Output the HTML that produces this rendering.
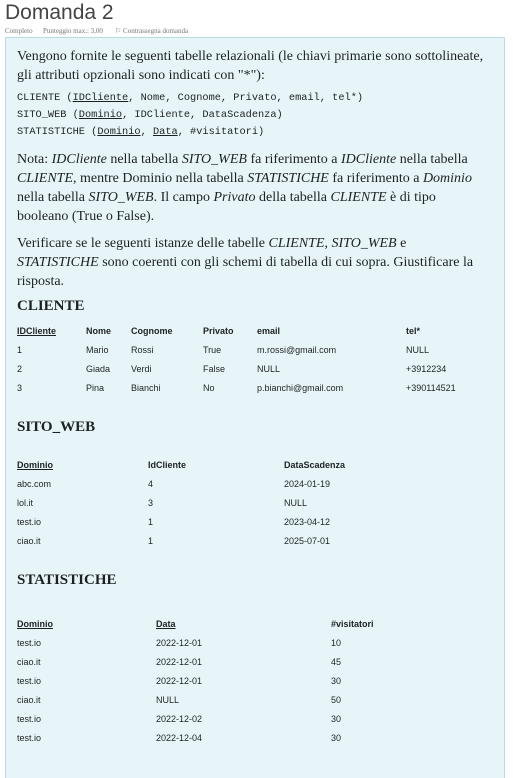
<!DOCTYPE html>
<html style="overflow:hidden"><head><meta charset="utf-8"><style>
html,body{margin:0;width:513px;height:778px;overflow:hidden}
body{background:#fff;position:relative;font-family:"Liberation Serif",serif;color:#1d2125}
.a{position:absolute;white-space:nowrap}
h1{position:absolute;left:5px;top:0;margin:0;font:normal 21px "Liberation Sans",sans-serif;color:#444;line-height:26px}
.meta{position:absolute;top:27px;font-size:7px;color:#777}
.box{position:absolute;left:5px;top:37px;width:498px;height:760px;background:#e7f5f8;border:1px solid #b8dce5}
.p{font-size:14px;line-height:19px}
.c{font:10.3px "Liberation Mono",monospace;line-height:17px}
.h{font-weight:bold;font-size:15px}
.t{font:9px "Liberation Sans",sans-serif}
.b{font-weight:bold}
u{text-decoration:underline}
</style></head><body>
<h1>Domanda 2</h1>
<div class="meta a" style="left:5px">Completo</div>
<div class="meta a" style="left:43px">Punteggio max.: 3,00</div>
<div class="meta a" style="left:115px">⚐ Contrassegna domanda</div>
<div class="box"></div>
<div class="a p" style="left:17px;top:47px">Vengono fornite le seguenti tabelle relazionali (le chiavi primarie sono sottolineate,</div>
<div class="a p" style="left:17px;top:66px">gli attributi opzionali sono indicati con "*"):</div>
<div class="a c" style="left:17px;top:90px">CLIENTE (<u>IDCliente</u>, Nome, Cognome, Privato, email, tel*)</div>
<div class="a c" style="left:17px;top:107px">SITO_WEB (<u>Dominio</u>, IDCliente, DataScadenza)</div>
<div class="a c" style="left:17px;top:124px">STATISTICHE (<u>Dominio</u>, <u>Data</u>, #visitatori)</div>
<div class="a p" style="left:17px;top:150px">Nota: <i>IDCliente</i> nella tabella <i>SITO_WEB</i> fa riferimento a <i>IDCliente</i> nella tabella</div>
<div class="a p" style="left:17px;top:169px"><i>CLIENTE</i>, mentre Dominio nella tabella <i>STATISTICHE</i> fa riferimento a <i>Dominio</i></div>
<div class="a p" style="left:17px;top:188px">nella tabella <i>SITO_WEB</i>. Il campo <i>Privato</i> della tabella <i>CLIENTE</i> è di tipo</div>
<div class="a p" style="left:17px;top:207px">booleano (True o False).</div>
<div class="a p" style="left:17px;top:234px">Verificare se le seguenti istanze delle tabelle <i>CLIENTE</i>, <i>SITO_WEB</i> e</div>
<div class="a p" style="left:17px;top:253px"><i>STATISTICHE</i> sono coerenti con gli schemi di tabella di cui sopra. Giustificare la</div>
<div class="a p" style="left:17px;top:272px">risposta.</div>
<div class="a h" style="left:17px;top:298px">CLIENTE</div>
<div class="a h" style="left:17px;top:419px">SITO_WEB</div>
<div class="a h" style="left:17px;top:572px">STATISTICHE</div>
<div id="t"></div>
<script>
function tbl(cols,y0,rows,gap){let h='';rows.forEach((r,i)=>{r.forEach((c,j)=>{let s=(i==0?'b ':'');let txt=(i==0&&j==0)||(i==0&&cols.u&&cols.u.includes(j))?'<u>'+c+'</u>':c;h+=`<div class="a t ${s}" style="left:${cols.x[j]}px;top:${y0+i*gap}px">${txt}</div>`})});return h}
let H='';
H+=tbl({x:[17,86,131,203,257,406]},326,[["IDCliente","Nome","Cognome","Privato","email","tel*"],["1","Mario","Rossi","True","m.rossi@gmail.com","NULL"],["2","Giada","Verdi","False","NULL","+3912234"],["3","Pina","Bianchi","No","p.bianchi@gmail.com","+390114521"]],19);
H+=tbl({x:[17,148,284]},460,[["Dominio","IdCliente","DataScadenza"],["abc.com","4","2024-01-19"],["lol.it","3","NULL"],["test.io","1","2023-04-12"],["ciao.it","1","2025-07-01"]],19);
H+=tbl({x:[17,156,331],u:[1]},619,[["Dominio","Data","#visitatori"],["test.io","2022-12-01","10"],["ciao.it","2022-12-01","45"],["test.io","2022-12-01","30"],["ciao.it","NULL","50"],["test.io","2022-12-02","30"],["test.io","2022-12-04","30"]],19);
document.getElementById('t').innerHTML=H;
</script>
</body></html>
